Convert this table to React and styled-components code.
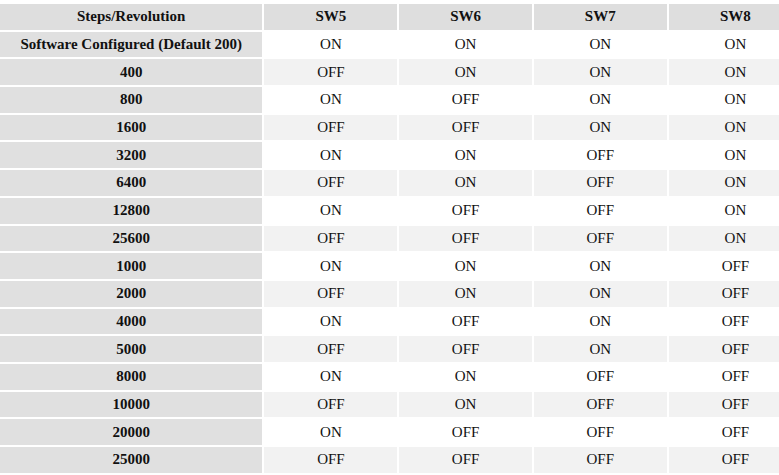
import React from 'react';
import styled, { createGlobalStyle, css } from 'styled-components';

const GlobalStyle = createGlobalStyle`
  html, body {
    margin: 0;
    padding: 0;
    background: #ffffff;
    overflow: hidden;
  }
`;

const Wrap = styled.div`
  width: 779px;
  height: 475px;
  overflow: hidden;
  background: #ffffff;
`;

const Table = styled.table`
  border-collapse: separate;
  border-spacing: 2px;
  margin: 2px 0 0 -2px;
  table-layout: fixed;
  width: 806px;
`;

const cellFont = css`
  font-family: "Liberation Serif", "Times New Roman", Times, serif;
  font-size: 15px;
  color: #111;
  height: 25.7px;
  padding: 0;
  text-align: center;
  vertical-align: middle;
`;

const Th = styled.th`
  ${cellFont}
  background: #dedede;
  font-weight: bold;
  width: ${p => p.$w}px;
`;

const Label = styled.td`
  ${cellFont}
  background: #e0e0e0;
  font-weight: bold;
`;

const Cell = styled.td`
  ${cellFont}
  background: ${p => (p.$shade ? '#f2f2f2' : '#ffffff')};
`;

const rows = [
  ['Software Configured (Default 200)', 'ON', 'ON', 'ON', 'ON'],
  ['400', 'OFF', 'ON', 'ON', 'ON'],
  ['800', 'ON', 'OFF', 'ON', 'ON'],
  ['1600', 'OFF', 'OFF', 'ON', 'ON'],
  ['3200', 'ON', 'ON', 'OFF', 'ON'],
  ['6400', 'OFF', 'ON', 'OFF', 'ON'],
  ['12800', 'ON', 'OFF', 'OFF', 'ON'],
  ['25600', 'OFF', 'OFF', 'OFF', 'ON'],
  ['1000', 'ON', 'ON', 'ON', 'OFF'],
  ['2000', 'OFF', 'ON', 'ON', 'OFF'],
  ['4000', 'ON', 'OFF', 'ON', 'OFF'],
  ['5000', 'OFF', 'OFF', 'ON', 'OFF'],
  ['8000', 'ON', 'ON', 'OFF', 'OFF'],
  ['10000', 'OFF', 'ON', 'OFF', 'OFF'],
  ['20000', 'ON', 'OFF', 'OFF', 'OFF'],
  ['25000', 'OFF', 'OFF', 'OFF', 'OFF'],
];

export default function App() {
  return (
    <Wrap>
      <GlobalStyle />
      <Table>
        <thead>
          <tr>
            <Th $w={262}>Steps/Revolution</Th>
            <Th $w={133}>SW5</Th>
            <Th $w={132}>SW6</Th>
            <Th $w={133}>SW7</Th>
            <Th $w={133}>SW8</Th>
          </tr>
        </thead>
        <tbody>
          {rows.map(([label, ...sw], i) => (
            <tr key={label}>
              <Label>{label}</Label>
              {sw.map((v, j) => (
                <Cell key={j} $shade={i % 2 === 1}>{v}</Cell>
              ))}
            </tr>
          ))}
        </tbody>
      </Table>
    </Wrap>
  );
}
